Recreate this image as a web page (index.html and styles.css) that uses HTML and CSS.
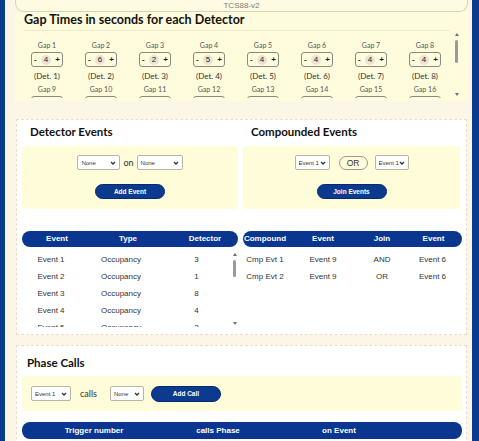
FILE: index.html
```html
<!DOCTYPE html>
<html lang="en">
<head>
  <meta charset="UTF-8">
  <meta name="viewport" content="width=device-width, initial-scale=1.0">
  <title>TCS88-v2</title>
  <link rel="stylesheet" href="styles.css">
</head>
<body>
  <div class="page">
    <div class="version">TCS88-v2</div>

    <!-- Gap times -->
    <section class="gaps">
      <h2 class="gaps-title">Gap Times in seconds for each Detector</h2>
      <div class="scroller gap-scroll">
        <div class="view">
          <div class="gap-grid" id="gapGrid"></div>
        </div>
        <div class="vbar">
          <svg class="arrow" viewBox="0 0 4 3"><path d="M2 0L4 3H0z"/></svg>
          <div class="thumb gap-thumb"></div>
          <svg class="arrow down" viewBox="0 0 4 3"><path d="M0 0H4L2 3z"/></svg>
        </div>
      </div>
    </section>

    <!-- Events -->
    <section class="panel events">
      <div class="col">
        <h3>Detector Events</h3>
        <div class="box">
          <div class="controls">
            <select class="sel sel-none"><option>None</option></select>
            <span class="word">on</span>
            <select class="sel sel-none2"><option>None</option></select>
          </div>
          <button class="btn">Add Event</button>
        </div>
        <div class="table">
          <div class="thead det-cols">
            <span>Event</span><span>Type</span><span class="pad">Detector</span>
          </div>
          <div class="scroller tbody">
            <div class="view" id="eventRows"></div>
            <div class="vbar">
              <svg class="arrow" viewBox="0 0 4 3"><path d="M2 0L4 3H0z"/></svg>
              <div class="thumb ev-thumb"></div>
              <svg class="arrow down" viewBox="0 0 4 3"><path d="M0 0H4L2 3z"/></svg>
            </div>
          </div>
        </div>
      </div>

      <div class="col">
        <h3>Compounded Events</h3>
        <div class="box">
          <div class="controls">
            <select class="sel sel-evt"><option>Event 1</option></select>
            <span class="join">OR</span>
            <select class="sel sel-evt2"><option>Event 1</option></select>
          </div>
          <button class="btn">Join Events</button>
        </div>
        <div class="table">
          <div class="thead cmp-cols">
            <span>Compound</span><span>Event</span><span>Join</span><span>Event</span>
          </div>
          <div class="tbody">
            <div class="row cmp-cols"><span>Cmp Evt 1</span><span>Event 9</span><span>AND</span><span>Event 6</span></div>
            <div class="row cmp-cols"><span>Cmp Evt 2</span><span>Event 9</span><span>OR</span><span>Event 6</span></div>
          </div>
        </div>
      </div>
    </section>

    <!-- Phase calls -->
    <section class="panel phase">
      <h3>Phase Calls</h3>
      <div class="box box-row">
        <select class="sel sel-call"><option>Event 1</option></select>
        <span class="word calls">calls</span>
        <select class="sel sel-phase"><option>None</option></select>
        <button class="btn btn-call">Add Call</button>
      </div>
      <div class="thead phase-cols">
        <span>Trigger number</span><span>calls Phase</span><span>on Event</span>
      </div>
    </section>
  </div>

  <script>
    const gapGrid = document.getElementById("gapGrid");
    const gapValues = [4, 6, 2, 5, 4, 4, 4, 4];
    for (let i = 1; i <= 16; i++) {
      const value = gapValues[i - 1] || 4;
      const gap = document.createElement("div");
      gap.className = "gap";
      gap.innerHTML = `<span class="gap-label">Gap ${i}</span>
        <div class="stepper"><span>-</span><span class="val">${value}</span><span>+</span></div>
        <span class="gap-det">(Det. ${i})</span>`;
      gapGrid.appendChild(gap);
    }

    const eventRows = document.getElementById("eventRows");
    const detectors = [3, 1, 8, 4, 2];
    detectors.forEach((det, i) => {
      const row = document.createElement("div");
      row.className = "row ev-cols";
      row.innerHTML = `<span>Event ${i + 1}</span><span>Occupancy</span><span>${det}</span>`;
      eventRows.appendChild(row);
    });
  </script>
</body>
</html>
```
FILE: styles.css
```css
body {
  margin: 0;
  background-color: #0b3a8e;
  font-family: "Lato", "Noto Sans", sans-serif;
  color: #222;
}
.page {
  margin-left: 5px;
  width: 467px;
  height: 441px;
  overflow: hidden;
  background-color: #fcf6e7;
}
.version {
  margin: 0 4px 0 10px;
  height: 12px;
  box-sizing: border-box;
  border: 1px solid #d8d3b3;
  border-top: none;
  border-radius: 0 0 9px 9px;
  background-color: #fefbe2;
  font: 8px/11px "Liberation Sans", sans-serif;
  color: #7a7a7a;
  text-align: center;
}

/* gap times */
.gaps {
  margin: 0 2px 0 10px;
  padding: 1px 0 3px 5px;
  background-color: #fefcdc;
}
.gaps-title {
  margin: 0 20px 0 4px;
  padding-bottom: 3px;
  font-size: 12.5px;
  line-height: 14px;
  font-weight: 700;
  color: #111;
  border-bottom: 1px solid #efeacb;
}
.gap-scroll {
  width: 440px;
  height: 67px;
}
.gap-grid {
  display: grid;
  grid-template-columns: repeat(8, 54px);
  row-gap: 3px;
  padding-top: 9px;
}
.gap {
  display: flex;
  flex-direction: column;
  align-items: center;
}
.gap-label {
  font-size: 7px;
  line-height: 10px;
  color: #555;
}
.stepper {
  margin-top: 2px;
  width: 32px;
  height: 15px;
  box-sizing: border-box;
  border: 1px solid #8a8a80;
  border-radius: 3px;
  display: flex;
  align-items: center;
  justify-content: space-around;
  font: 700 8px "Liberation Sans", sans-serif;
  color: #222;
}
.val {
  width: 10px;
  height: 10px;
  line-height: 10px;
  text-align: center;
  border-radius: 50%;
  background-color: #e7e5d6;
  font-weight: 400;
}
.gap-det {
  margin-top: 4px;
  font-size: 8px;
  line-height: 10px;
  color: #333;
}

/* scroll areas with a thin bar */
.scroller {
  display: flex;
}
.view {
  flex: 1;
  overflow: hidden;
}
.vbar {
  width: 7px;
  padding: 2px 0;
  box-sizing: border-box;
  display: flex;
  flex-direction: column;
  align-items: center;
}
.arrow {
  width: 4px;
  height: 3px;
  fill: #6f6f6f;
}
.arrow.down {
  margin-top: auto;
}
.thumb {
  width: 3px;
  border-radius: 2px;
  background-color: #9a9a9a;
}
.gap-thumb {
  margin-top: 4px;
  height: 23px;
}
.ev-thumb {
  margin-top: 4px;
  height: 17px;
}

/* panels */
.panel {
  margin: 0 5px 0 11px;
  border: 1px dashed #f0dcc2;
  background-color: #fff;
}
.events {
  margin-top: 18px;
  height: 216px;
  box-sizing: border-box;
  padding: 4px 6px 0 5px;
  display: grid;
  grid-template-columns: 216px 217px;
  column-gap: 5px;
}
.col h3, .phase h3 {
  margin: 0 0 6px 8px;
  font-size: 11.5px;
  line-height: 16px;
  font-weight: 700;
  color: #111;
}
.box {
  height: 63px;
  box-sizing: border-box;
  padding-top: 9px;
  display: flex;
  flex-direction: column;
  align-items: center;
  background-color: #fefcd9;
  border-radius: 4px;
}
.controls {
  display: flex;
  align-items: center;
  height: 15px;
}
.sel {
  -webkit-appearance: none;
  appearance: none;
  height: 15px;
  box-sizing: border-box;
  margin: 0;
  padding: 0 0 0 3px;
  border: 1px solid #b9b6a8;
  border-radius: 2px;
  font: 6px "Liberation Sans", sans-serif;
  color: #333;
  background: #fff no-repeat right 3px center / 6px 4px url("data:image/svg+xml,%3Csvg xmlns='http://www.w3.org/2000/svg' viewBox='0 0 6 4'%3E%3Cpath d='M1 1l2 2 2-2' fill='none' stroke='%23333' stroke-width='1.3'/%3E%3C/svg%3E");
}
.sel-none { width: 43px; }
.sel-none2 { width: 46px; }
.sel-evt { width: 35px; }
.sel-evt2 { width: 34px; }
.sel-call { width: 40px; }
.sel-phase { width: 34px; }
.word {
  margin: 0 3px;
  font-size: 9px;
  color: #333;
}
.join {
  margin: 0 7px 0 9px;
  width: 29px;
  height: 14px;
  box-sizing: border-box;
  border: 1px solid #9a9a9a;
  border-radius: 8px;
  font: 8.5px/12px "Liberation Sans", sans-serif;
  text-align: center;
  color: #333;
}
.btn {
  margin-top: 14px;
  width: 70px;
  height: 15px;
  padding: 0;
  border: 1px solid #072a6c;
  border-radius: 8px;
  background-color: #0b3a8e;
  color: #fff;
  font: 700 6.5px "Liberation Sans", sans-serif;
}

/* tables */
.table {
  margin-top: 22px;
}
.thead {
  height: 16px;
  border-radius: 8px;
  background-color: #0a3690;
  color: #fff;
  font: 700 8px/16px "Liberation Sans", sans-serif;
  text-align: center;
}
.det-cols {
  display: grid;
  grid-template-columns: 70px 72px 1fr;
}
.pad { padding-left: 8px; }
.tbody {
  margin-top: 4px;
  height: 76px;
  overflow: hidden;
}
.row {
  height: 17px;
  font: 8px/17px "Liberation Sans", sans-serif;
  color: #333;
  text-align: center;
}
.ev-cols {
  display: grid;
  grid-template-columns: 58px 82px 1fr;
}
.cmp-cols {
  display: grid;
  grid-template-columns: 44px 72px 46px 1fr;
}
.col:last-child .thead {
  margin-right: -2px;
}

/* phase calls */
.phase {
  margin-top: 10px;
  padding: 9px 4px 20px 5px;
}
.phase h3 {
  margin: 0 0 5px 5px;
}
.box-row {
  height: 35px;
  padding: 0 0 0 9px;
  flex-direction: row;
}
.calls {
  margin: 0 0 0 9px;
}
.sel-phase {
  margin-left: 13px;
}
.btn-call {
  margin: 0 0 0 7px;
  height: 16px;
}
.phase-cols {
  margin-top: 11px;
  height: 17px;
  line-height: 17px;
  display: grid;
  grid-template-columns: 144px 104px 138px;
}
```
